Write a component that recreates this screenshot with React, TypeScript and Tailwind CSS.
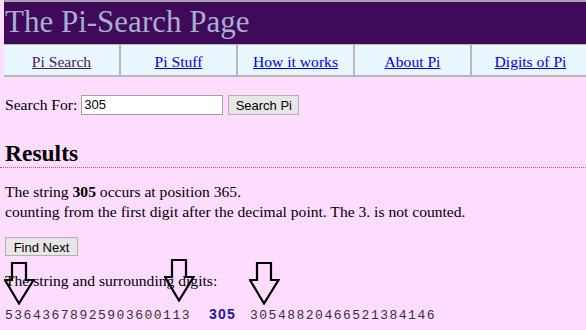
import React from 'react';

const navItems = [
  { label: 'Pi Search', visited: true },
  { label: 'Pi Stuff' },
  { label: 'How it works' },
  { label: 'About Pi' },
  { label: 'Digits of Pi' },
];

const Arrow = ({ className }: { className: string }) => (
  <svg className={`absolute ${className}`} width="31" height="43" viewBox="0 0 31 43" fill="none">
    <path d="M8 1 H22 V18 H29.5 L15 41.5 L1 18 H8 Z" stroke="#000" strokeWidth="2.2" strokeLinejoin="miter" />
  </svg>
);

const App = () => {
  return (
    <div className="relative min-h-screen w-[586px] overflow-hidden bg-[#fedcfe] font-['Liberation_Serif',serif] text-[15.6px] text-black">
      <div className="ml-[4px] w-[600px] border-t-2 border-[#a8a0b0]">
        <div className="h-[42px] bg-[#400a5a] pl-[1px] text-[31px] leading-[40px] text-[#a8aed0]">The Pi-Search Page</div>
        <div className="flex h-[33px] border-t border-b-2 border-[#b8b8b8] bg-[#e8f6fe]">
          {navItems.map((item, i) => (
            <div
              key={item.label}
              className={`flex w-[117px] items-center justify-center pt-[3px] ${i < 4 ? 'border-r-2 border-[#b8b8b8]' : ''}`}
            >
              <a href="#" className={`underline ${item.visited ? 'text-[#4a1a5a]' : 'text-[#0000ee]'}`}>
                {item.label}
              </a>
            </div>
          ))}
        </div>
      </div>

      <div className="px-[5px]">
        <div className="mt-[16px] flex items-center">
          <span>Search For:</span>
          <input
            defaultValue="305"
            className="ml-[4px] h-[20px] w-[142px] border border-[#a0a0a0] bg-white px-[2px] font-['Liberation_Sans',sans-serif] text-[13px] outline-none"
          />
          <button className="ml-[5px] h-[20px] w-[71px] border border-[#b0b0b0] bg-[#e6e6e6] font-['Liberation_Sans',sans-serif] text-[13px]">
            Search Pi
          </button>
        </div>

        <h2 className="mt-[24px] text-[23.5px] font-bold leading-[27px]">Results</h2>
      </div>
      <div className="border-b border-dotted border-[#e8485a]" />

      <div className="px-[5px]">
        <p className="mt-[14px] leading-[20px]">
          The string <b>305</b> occurs at position 365.
          <br />
          counting from the first digit after the decimal point. The 3. is not counted.
        </p>
        <button className="mt-[15px] h-[19px] w-[73px] border border-[#b0b0b0] bg-[#e6e6e6] font-['Liberation_Sans',sans-serif] text-[13px]">
          Find Next
        </button>
        <p className="mt-[12px] leading-[20px]">The string and surrounding digits:</p>
        <div className="mt-[13px] flex items-baseline font-['Liberation_Mono',monospace] text-[13px] tracking-[1.5px] text-[#333]">
          <span>53643678925903600113</span>
          <span className="ml-[18px] font-['Liberation_Sans',sans-serif] text-[14px] font-bold tracking-[1.2px] text-[#1a1a9a]">305</span>
          <span className="ml-[14px]">30548820466521384146</span>
        </div>
      </div>

      <Arrow className="left-[4px] top-[262px]" />
      <Arrow className="left-[164px] top-[259px]" />
      <Arrow className="left-[249px] top-[262px]" />
    </div>
  );
};

export default App;
